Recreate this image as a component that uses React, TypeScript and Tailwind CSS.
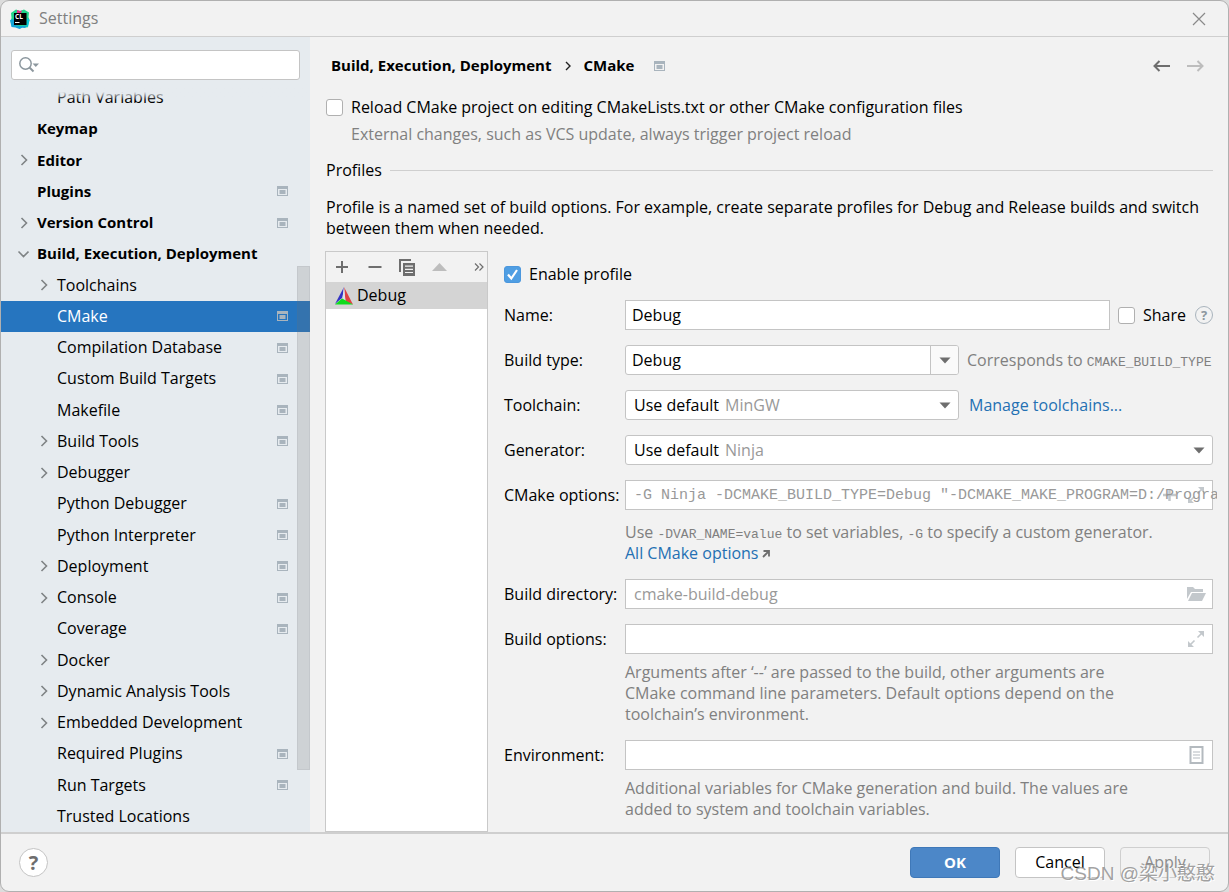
import { useState } from "react";
import type { ReactNode } from "react";

type TreeItem = {
  label: string;
  level: 0 | 1;
  arrow?: "right" | "down";
  project?: boolean;
};

const treeItems: TreeItem[] = [
  { label: "Path Variables", level: 1 },
  { label: "Keymap", level: 0 },
  { label: "Editor", level: 0, arrow: "right" },
  { label: "Plugins", level: 0, project: true },
  { label: "Version Control", level: 0, arrow: "right", project: true },
  { label: "Build, Execution, Deployment", level: 0, arrow: "down" },
  { label: "Toolchains", level: 1, arrow: "right" },
  { label: "CMake", level: 1, project: true },
  { label: "Compilation Database", level: 1, project: true },
  { label: "Custom Build Targets", level: 1, project: true },
  { label: "Makefile", level: 1, project: true },
  { label: "Build Tools", level: 1, arrow: "right", project: true },
  { label: "Debugger", level: 1, arrow: "right" },
  { label: "Python Debugger", level: 1, project: true },
  { label: "Python Interpreter", level: 1, project: true },
  { label: "Deployment", level: 1, arrow: "right", project: true },
  { label: "Console", level: 1, arrow: "right", project: true },
  { label: "Coverage", level: 1, project: true },
  { label: "Docker", level: 1, arrow: "right" },
  { label: "Dynamic Analysis Tools", level: 1, arrow: "right" },
  { label: "Embedded Development", level: 1, arrow: "right" },
  { label: "Required Plugins", level: 1, project: true },
  { label: "Run Targets", level: 1, project: true },
  { label: "Trusted Locations", level: 1 },
];

function AppLogo() {
  return (
    <svg width="20" height="20" viewBox="0 0 20 20" aria-hidden="true">
      <path d="M1 4l5-3.500 4 1.500 4-1.500 5 3-.5 4.500 1 3-2 7.500-5-.5-2.500 1.500-4-1.500-4-.5-1.500-5 1-3.500z" fill="#21d789" />
      <path d="M0 11l4-1 1 6 5 1 6-.5-.5 2.500-3.500-.3-2.500 1.300-4-1.500-4-.5z" fill="#12a5d8" />
      <path d="M17 9l2.500 2-1.500 7-2-.5z" fill="#07c3d8" />
      <path d="M7 1l3 1 2-.5-1 2.500H7z" fill="#e8318c" />
      <rect x="4" y="4" width="12.500" height="12" fill="#000" />
      <text x="5" y="10" fontSize="6.500" fontWeight="700" fill="#fff" fontFamily="Open Sans, sans-serif">CL</text>
      <rect x="5" y="13" width="4.500" height="1" fill="#fff" />
    </svg>
  );
}

function ProjectIcon({ className = "" }: { className?: string }) {
  return (
    <svg width="11" height="10" viewBox="0 0 11 10" className={className} aria-hidden="true">
      <path d="M0 0h11v10H0zM1 3v6h9V3z" fill="#a9b4bd" fillRule="evenodd" />
      <rect x="2.500" y="4" width="6" height="4" fill="#a9b4bd" />
    </svg>
  );
}

function Chevron({ down }: { down?: boolean }) {
  return (
    <svg width="12" height="12" viewBox="0 0 12 12" fill="none" stroke="#7f8385" strokeWidth="1.600" aria-hidden="true">
      <path d={down ? "M1.500 3.500l5 5 5-5" : "M4.500 1l5 5-5 5"} />
    </svg>
  );
}

function Caret({ className = "" }: { className?: string }) {
  return (
    <svg width="12" height="7" viewBox="0 0 12 7" className={className} aria-hidden="true">
      <path d="M.5.500h11L6 6.500z" fill="#6e6e6e" />
    </svg>
  );
}

function ExpandIcon() {
  return (
    <svg width="16" height="16" viewBox="0 0 16 16" fill="#c3c8cc" stroke="#c3c8cc" aria-hidden="true">
      <path d="M10 0h6v6zM0 10v6h6z" stroke="none" />
      <path d="M9.500 6.500L14 2M6.500 9.500L2 14" strokeWidth="1.600" />
    </svg>
  );
}

function CMakeIcon() {
  return (
    <svg width="18" height="18" viewBox="0 0 18 18" aria-hidden="true">
      <path d="M9 0L0 17l7.500-6.500z" fill="#3434c4" />
      <path d="M9 0l9 17.500-7.500-3z" fill="#e04343" />
      <path d="M9 0l1.500 14.500-3-4z" fill="#dfe3ea" />
      <path d="M0 17.500l7-6 11 6z" fill="#0edc1c" />
    </svg>
  );
}

function CheckBox({ id, label, defaultChecked }: { id: string; label: string; defaultChecked?: boolean }) {
  return (
    <div className="flex shrink-0 items-center gap-2">
      <span className="relative flex">
        <input
          id={id}
          type="checkbox"
          defaultChecked={defaultChecked}
          className="peer size-[17px] appearance-none rounded-[3px] border border-[#b0b0b0] bg-white checked:border-[#4b97dd] checked:bg-[#4f9ee3]"
        />
        <svg
          viewBox="0 0 17 17"
          className="pointer-events-none absolute inset-0 hidden peer-checked:block"
          fill="none"
          stroke="#fff"
          strokeWidth="2.200"
          aria-hidden="true"
        >
          <path d="M4 8.500l3.300 4L13 4" />
        </svg>
      </span>
      <label htmlFor={id}>{label}</label>
    </div>
  );
}

function Code({ children }: { children: ReactNode }) {
  return <code className="font-['Liberation_Mono',monospace] text-[13px] leading-none">{children}</code>;
}

function Field({ id, label, hint, children }: { id: string; label: string; hint?: ReactNode; children: ReactNode }) {
  return (
    <div className="grid grid-cols-[121px_minmax(0,1fr)]">
      <label htmlFor={id} className="whitespace-nowrap leading-[30px]">
        {label}
      </label>
      <div className="flex min-w-0 items-center">{children}</div>
      {hint && <div className="col-start-2 text-[#808080]">{hint}</div>}
    </div>
  );
}

function DefaultSelect({ id, detail }: { id: string; detail: string }) {
  return (
    <div className="relative w-full">
      <select id={id} className="block h-[30px] w-full appearance-none rounded-[3px] border border-[#c4c4c4] bg-white pr-8 pl-2">
        <option>Use default</option>
      </select>
      <span className="pointer-events-none absolute inset-y-0 left-[100px] flex items-center text-[#999]">{detail}</span>
      <Caret className="pointer-events-none absolute top-3 right-2" />
    </div>
  );
}

function Sidebar() {
  const [selected, setSelected] = useState("CMake");

  return (
    <aside className="flex w-[309px] shrink-0 flex-col bg-[#e6ebef]">
      <div className="relative mx-[10px] mt-[13px] mb-[2px]">
        <input
          type="text"
          aria-label="Search settings"
          className="block h-[30px] w-full rounded-[3px] border border-[#c4c4c4] bg-white pr-2 pl-9"
        />
        <svg width="21" height="16" viewBox="0 0 21 16" className="pointer-events-none absolute top-[7px] left-2" fill="none" aria-hidden="true">
          <circle cx="6.500" cy="6.500" r="5.700" stroke="#8c979e" strokeWidth="1.500" />
          <path d="M10.500 10.500l4 4" stroke="#8c979e" strokeWidth="2" />
          <path d="M13.500 6.500h6.500l-3.200 3.500z" fill="#8c979e" />
        </svg>
      </div>

      <div className="relative flex flex-1">
        <ul className="flex flex-1 flex-col">
          {treeItems.map((item) => {
            const active = item.label === selected;
            return (
              <li key={item.label} className="flex min-h-[31px] flex-1">
                <button
                  type="button"
                  onClick={() => setSelected(item.label)}
                  className={`flex w-full items-center pr-[22px] text-left ${
                    item.level === 0 ? "pl-4 text-[15px] font-bold" : "pl-9"
                  } ${active ? "bg-[#2675bf] text-white" : ""}`}
                >
                  <span className="flex w-5 shrink-0">{item.arrow && <Chevron down={item.arrow === "down"} />}</span>
                  <span className="flex-1 whitespace-nowrap">{item.label}</span>
                  {item.project && <ProjectIcon />}
                </button>
              </li>
            );
          })}
        </ul>
        <div className="pointer-events-none absolute inset-x-0 top-0 h-[18px] bg-linear-to-b from-[#e6ebef] from-55% to-transparent" />
        <div className="absolute top-[184px] right-0 h-[504px] w-[13px] border border-[#6e7780]/10 bg-[#6e6e6e]/20" />
      </div>
    </aside>
  );
}

function ProfileList() {
  return (
    <div className="flex w-[163px] shrink-0 flex-col border border-[#c9c9c9] bg-white">
      <div className="flex h-[30px] items-center bg-[#f2f2f2] pr-[3px] pl-[9px] text-[#6e6e6e]">
        <button type="button" aria-label="Add" className="mr-[19px]">
          <svg width="14" height="14" viewBox="0 0 14 14" stroke="currentColor" strokeWidth="2">
            <path d="M7 1v12M1 7h12" />
          </svg>
        </button>
        <button type="button" aria-label="Remove" className="mr-[17px]">
          <svg width="14" height="14" viewBox="0 0 14 14" stroke="currentColor" strokeWidth="2">
            <path d="M.5 7h13" />
          </svg>
        </button>
        <button type="button" aria-label="Copy" className="mr-[17px]">
          <svg width="16" height="17" viewBox="0 0 16 17" fill="currentColor">
            <path d="M0 0h12v2H2v11H0z" />
            <path d="M4 4h12v13H4zM6 6.500v1.200h8V6.500zM6 9.700v1.200h8V9.700zM6 12.900v1.200h8v-1.200z" fillRule="evenodd" />
          </svg>
        </button>
        <button type="button" aria-label="Move up" className="text-[#bdbdbd]">
          <svg width="15" height="8" viewBox="0 0 15 8" fill="currentColor">
            <path d="M7.500 0L15 8H0z" />
          </svg>
        </button>
        <button type="button" aria-label="More" className="ml-auto">
          <svg width="10" height="8" viewBox="0 0 10 8" fill="none" stroke="currentColor" strokeWidth="1.200">
            <path d="M1 .5L4.500 4 1 7.500M5.500 .5L9 4 5.500 7.500" />
          </svg>
        </button>
      </div>
      <button type="button" className="flex h-[27px] items-center gap-1 bg-[#d4d4d4] pl-[9px] text-left">
        <CMakeIcon />
        Debug
      </button>
    </div>
  );
}

function ProfileForm() {
  const inputClass = "block h-[30px] w-full border border-[#c4c4c4] bg-white px-[6px]";

  return (
    <form className="flex min-w-0 flex-1 flex-col gap-[15px] pt-[13px]">
      <CheckBox id="enable" label="Enable profile" defaultChecked />

      <Field id="name" label="Name:">
        <input id="name" type="text" defaultValue="Debug" className={inputClass} />
        <div className="ml-2 flex items-center gap-[9px]">
          <CheckBox id="share" label="Share" />
          <button
            type="button"
            aria-label="About sharing"
            className="flex size-[18px] items-center justify-center rounded-full border border-[#a9b4bd] text-[13px] font-bold leading-none text-[#8c979e]"
          >
            ?
          </button>
        </div>
      </Field>

      <Field id="build-type" label="Build type:">
        <div className="flex h-[30px] min-w-0 flex-1 overflow-hidden rounded-[3px] border border-[#c4c4c4] bg-white">
          <input id="build-type" type="text" defaultValue="Debug" className="w-full min-w-0 px-[6px]" />
          <button
            type="button"
            aria-label="Show build types"
            className="flex w-7 shrink-0 items-center justify-center border-l border-[#c4c4c4] bg-[#fafafa]"
          >
            <Caret />
          </button>
        </div>
        <p className="ml-2 w-[246px] whitespace-nowrap text-[#808080]">
          Corresponds to <Code>CMAKE_BUILD_TYPE</Code>
        </p>
      </Field>

      <Field id="toolchain" label="Toolchain:">
        <DefaultSelect id="toolchain" detail="MinGW" />
        <a href="#toolchains" className="ml-[10px] w-[244px] shrink-0 text-[#2470b3]">
          Manage toolchains...
        </a>
      </Field>

      <Field id="generator" label="Generator:">
        <DefaultSelect id="generator" detail="Ninja" />
      </Field>

      <Field
        id="cmake-options"
        label="CMake options:"
        hint={
          <div className="pt-3">
            <p>
              Use <Code>-DVAR_NAME=value</Code> to set variables, <Code>-G</Code> to specify a custom generator.
            </p>
            <a href="#cmake-options" className="flex items-center gap-1 text-[#2470b3]">
              All CMake options
              <svg width="8" height="8" viewBox="0 0 8 8" fill="none" stroke="#6e6e6e" strokeWidth="1.800" aria-hidden="true">
                <path d="M1 7l5.500-5.500M1.500 1H7v5.500" />
              </svg>
            </a>
          </div>
        }
      >
        <div className="relative h-[30px] w-full border border-[#c4c4c4] bg-white">
          <div className="absolute inset-y-0 right-2 flex items-center gap-3">
            <svg width="13" height="12" viewBox="0 0 13 12" stroke="#c3c8cc" strokeWidth="2.500" aria-hidden="true">
              <path d="M6.500 0v12M0 6h13" />
            </svg>
            <ExpandIcon />
          </div>
          <input
            id="cmake-options"
            type="text"
            placeholder={'-G Ninja -DCMAKE_BUILD_TYPE=Debug "-DCMAKE_MAKE_PROGRAM=D:/Program Files/ninja"'}
            className="relative block h-7 w-[calc(100%+5px)] bg-transparent pl-2 font-['Liberation_Mono',monospace] text-[15px] placeholder:text-[#999]"
          />
        </div>
      </Field>

      <Field id="build-directory" label="Build directory:">
        <div className="relative w-full">
          <input
            id="build-directory"
            type="text"
            placeholder="cmake-build-debug"
            className="block h-[30px] w-full border border-[#c4c4c4] bg-white pr-8 pl-2 placeholder:text-[#999]"
          />
          <button type="button" aria-label="Browse" className="absolute inset-y-0 right-[7px]">
            <svg width="19" height="14" viewBox="0 0 19 14" fill="#c3c8cc">
              <path d="M0 0h6l2 2h8v3H4L0 12z" />
              <path d="M5 6h14l-4 8H1z" />
            </svg>
          </button>
        </div>
      </Field>

      <Field
        id="build-options"
        label="Build options:"
        hint={
          <p className="pt-2">
            Arguments after ‘--’ are passed to the build, other arguments are
            <br />
            CMake command line parameters. Default options depend on the
            <br />
            toolchain’s environment.
          </p>
        }
      >
        <div className="relative w-full">
          <input id="build-options" type="text" className={inputClass} />
          <button type="button" aria-label="Expand" className="absolute inset-y-0 right-[9px]">
            <ExpandIcon />
          </button>
        </div>
      </Field>

      <Field
        id="environment"
        label="Environment:"
        hint={
          <p className="pt-2">
            Additional variables for CMake generation and build. The values are
            <br />
            added to system and toolchain variables.
          </p>
        }
      >
        <div className="relative w-full">
          <input id="environment" type="text" className={inputClass} />
          <button type="button" aria-label="Edit variables" className="absolute inset-y-0 right-[9px]">
            <svg width="15" height="18" viewBox="0 0 15 18" fill="none" stroke="#b4babf" aria-hidden="true">
              <rect x="1.500" y="1" width="12" height="16" strokeWidth="2" />
              <path d="M4 6h7M4 9h7M4 12h7" strokeWidth="1.200" />
            </svg>
          </button>
        </div>
      </Field>
    </form>
  );
}

export default function App() {
  return (
    <div className="min-h-screen bg-[#dcdcdc] font-['Open_Sans','Noto_Sans_CJK_SC',sans-serif] text-base leading-[21px] text-black">
      <div className="relative flex min-h-screen flex-col overflow-hidden rounded-[9px] border border-[#b0b0b0] bg-[#f2f2f2]">
        <header className="flex h-9 shrink-0 items-center border-b border-[#cfcfcf] pr-[22px] pl-[9px] text-[#808080]">
          <AppLogo />
          <h1 className="ml-[9px] flex-1">Settings</h1>
          <button type="button" aria-label="Close">
            <svg width="14" height="14" viewBox="0 0 14 14" fill="none" stroke="#8a8a8a" strokeWidth="1.200">
              <path d="M1 1l12 12M13 1L1 13" />
            </svg>
          </button>
        </header>

        <div className="flex flex-1">
          <Sidebar />

          <main className="flex min-w-0 flex-1 flex-col px-[15px]">
            <div className="flex items-center pt-[18px] pl-[6px]">
              <h2 className="flex items-center text-[15px] font-bold">
                Build, Execution, Deployment
                <svg width="6" height="10" viewBox="0 0 6 10" className="mx-[13px]" fill="none" stroke="#222" strokeWidth="1.400" aria-hidden="true">
                  <path d="M1 1l4 4-4 4" />
                </svg>
                CMake
              </h2>
              <ProjectIcon className="ml-5" />
              <div className="ml-auto flex gap-[17px] pr-[9px]">
                <button type="button" aria-label="Back" className="text-[#6e6e6e]">
                  <svg width="17" height="12" viewBox="0 0 17 12" fill="none" stroke="currentColor" strokeWidth="2">
                    <path d="M17 6H1.500M6.500 1l-5 5 5 5" />
                  </svg>
                </button>
                <button type="button" aria-label="Forward" disabled className="text-[#bdbdbd]">
                  <svg width="17" height="12" viewBox="0 0 17 12" fill="none" stroke="currentColor" strokeWidth="2">
                    <path d="M0 6h15.500M10.500 1l5 5-5 5" />
                  </svg>
                </button>
              </div>
            </div>

            <div className="mt-[21px] pl-px">
              <CheckBox id="reload" label="Reload CMake project on editing CMakeLists.txt or other CMake configuration files" />
            </div>
            <p className="mt-[6px] pl-[26px] text-[#808080]">External changes, such as VCS update, always trigger project reload</p>

            <div className="mt-[15px] flex items-center gap-2 pl-px">
              <h3>Profiles</h3>
              <div className="h-px flex-1 bg-[#cfcfcf]" />
            </div>
            <p className="mt-4 pl-px">
              Profile is a named set of build options. For example, create separate profiles for Debug and Release builds and switch
              <br />
              between them when needed.
            </p>

            <div className="mt-3 flex flex-1 gap-4">
              <ProfileList />
              <ProfileForm />
            </div>
          </main>
        </div>

        <footer className="flex h-[59px] shrink-0 items-center border-t-2 border-[#cfcfcf] px-[18px]">
          <button
            type="button"
            aria-label="Help"
            className="flex size-[29px] items-center justify-center rounded-full border border-[#c4c4c4] bg-white text-xl font-bold text-[#6e6e6e]"
          >
            ?
          </button>
          <div className="ml-auto flex gap-[15px]">
            <button type="button" className="h-[31px] w-[90px] rounded-[4px] border border-[#3f78b8] bg-[#4c87c8] text-[15px] font-bold text-white">
              OK
            </button>
            <button type="button" className="h-[31px] w-[90px] rounded-[4px] border border-[#c4c4c4] bg-white">
              Cancel
            </button>
            <button type="button" disabled className="h-[31px] w-[90px] rounded-[4px] border border-[#cfcfcf] text-[#8c8c8c]">
              Apply
            </button>
          </div>
        </footer>

        <p className="pointer-events-none absolute right-[13px] bottom-1 font-['Liberation_Sans','Noto_Sans_CJK_SC',sans-serif] text-[19px] leading-[26px] whitespace-nowrap text-[#8a8a8a]/80 [text-shadow:1px_1px_0_#fff]">
          CSDN @梁小憨憨
        </p>
      </div>
    </div>
  );
}
